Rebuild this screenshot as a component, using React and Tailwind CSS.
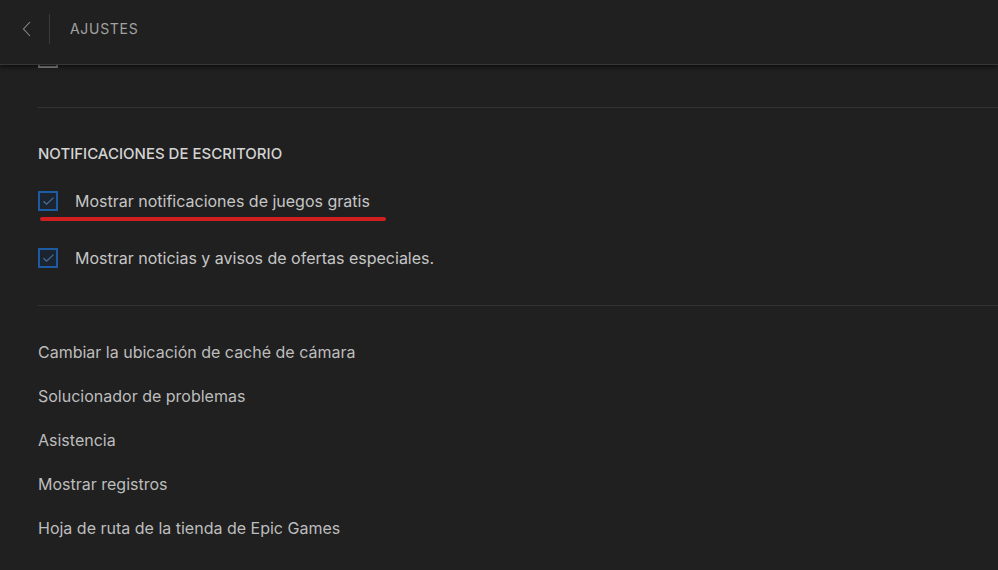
// Pantalla de ajustes (lanzador) — sección de notificaciones de escritorio.
function Check({ checked = true }) {
  return (
    <span
      className={`grid h-5 w-5 shrink-0 place-items-center border-2 ${
        checked ? 'border-[#1d5ca3] bg-[#1c2430]' : 'border-[#8a8a8a] bg-transparent'
      }`}
    >
      {checked && (
        <svg width="13" height="10" viewBox="0 0 13 10" fill="none">
          <path d="M1.5 5.2 4.6 8.2 11.5 1.6" stroke="#44719f" strokeWidth="1.2" />
        </svg>
      )}
    </span>
  )
}

function CheckRow({ label, checked = true, textClass = '' }) {
  return (
    <label className="flex h-5 items-center gap-[17px]">
      <Check checked={checked} />
      <span className={`text-base leading-5 text-[#c6c6c6] ${textClass}`}>{label}</span>
    </label>
  )
}

const links = [
  'Cambiar la ubicación de caché de cámara',
  'Solucionador de problemas',
  'Asistencia',
  'Mostrar registros',
  'Hoja de ruta de la tienda de Epic Games',
]

export default function App() {
  return (
    <div
      className="relative h-[570px] w-[998px] overflow-hidden bg-[#202020]"
      style={{ fontFamily: 'Inter, "Noto Sans", sans-serif' }}
    >
      {/* cabecera fija */}
      <header className="absolute inset-x-0 top-0 z-10 flex h-[65px] items-center border-b border-[#363636] bg-[#202020] pb-[6px] shadow-[0_2px_4px_rgba(0,0,0,0.6)]">
        <button className="flex h-full w-[49px] items-center justify-center pl-1">
          <svg width="10" height="16" viewBox="0 0 10 16" fill="none">
            <path d="M8 1 1.5 8 8 15" stroke="#8a8a8a" strokeWidth="1.1" />
          </svg>
        </button>
        <span className="h-[30px] w-px bg-[#3a3a3a]" />
        <span className="ml-5 text-sm tracking-wider text-[#a2a2a2]">AJUSTES</span>
      </header>

      <main className="pl-[38px] pt-[48px]">
        <CheckRow
          checked={false}
          label="Mostrar la página de inicio al iniciar"
          textClass="-translate-y-[6px] text-[#9a9a9a]"
        />

        <div className="mt-[39px] border-t border-[#333333]" />

        <h2 className="mt-[36px] text-[15px] leading-5 font-medium text-[#d4d4d4]">
          NOTIFICACIONES DE ESCRITORIO
        </h2>

        <div className="relative mt-[27px]">
          <CheckRow label="Mostrar notificaciones de juegos gratis" />
          <span className="absolute left-[2px] top-[26px] h-[4px] w-[346px] rounded-full bg-[#d11e1e]" />
        </div>
        <div className="mt-[37px]">
          <CheckRow label="Mostrar noticias y avisos de ofertas especiales." />
        </div>

        <div className="mt-[37px] border-t border-[#333333]" />

        <ul className="mt-[34px] flex flex-col gap-5">
          {links.map((l) => (
            <li key={l} className="text-base leading-6 text-[#bdbdbd]">
              {l}
            </li>
          ))}
        </ul>
      </main>
    </div>
  )
}
